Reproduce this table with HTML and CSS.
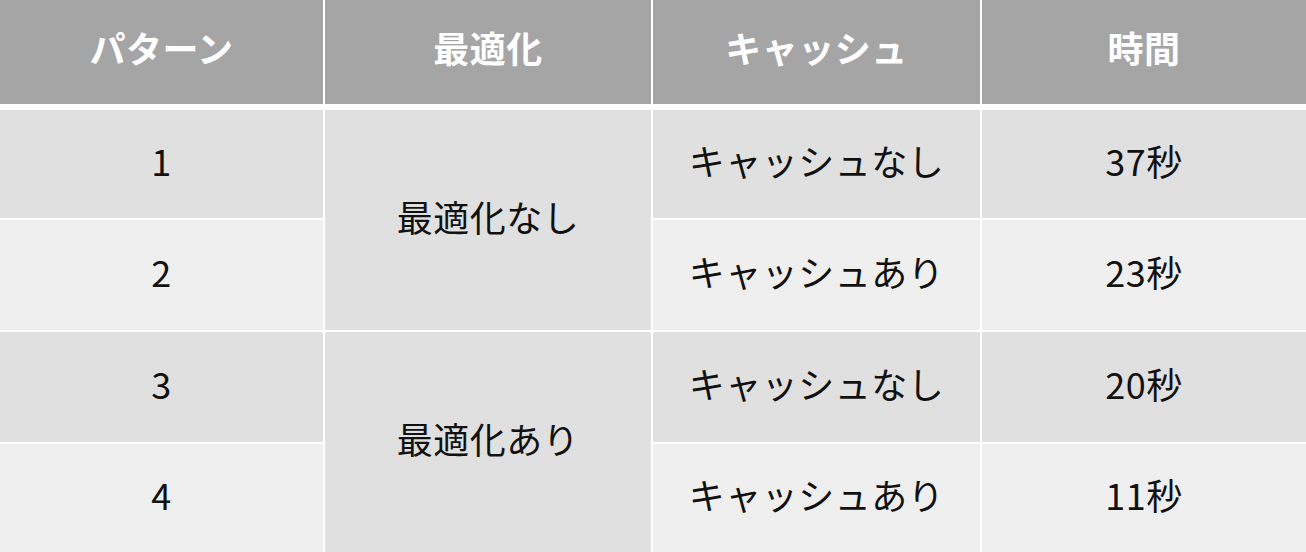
FILE: index.html
```html
<!DOCTYPE html>
<html lang="ja">
<head>
<meta charset="utf-8">
<link rel="stylesheet" href="styles.css">
</head>
<body>
<div class="table">
  <div class="cell head">パターン</div>
  <div class="cell head">最適化</div>
  <div class="cell head">キャッシュ</div>
  <div class="cell head">時間</div>

  <div class="cell dark">1</div>
  <div class="cell dark merged m1">最適化なし</div>
  <div class="cell dark">キャッシュなし</div>
  <div class="cell dark">37秒</div>

  <div class="cell light">2</div>
  <div class="cell light">キャッシュあり</div>
  <div class="cell light">23秒</div>

  <div class="cell dark">3</div>
  <div class="cell dark merged m2">最適化あり</div>
  <div class="cell dark">キャッシュなし</div>
  <div class="cell dark">20秒</div>

  <div class="cell light">4</div>
  <div class="cell light">キャッシュあり</div>
  <div class="cell light">11秒</div>
</div>
</body>
</html>
```
FILE: styles.css
```css
html, body {
  margin: 0;
  padding: 0;
  background: #ffffff;
}
body {
  width: 1306px;
  height: 552px;
  overflow: hidden;
  font-family: "Noto Sans CJK JP", "Noto Sans", sans-serif;
}
.table {
  display: grid;
  grid-template-columns: 323px 326px 327px 324px;
  grid-template-rows: 108px 108px 110px 110px 108px;
  column-gap: 2px;
  row-gap: 2px;
  background: #ffffff;
}
.cell {
  display: flex;
  align-items: center;
  justify-content: center;
  font-size: 36px;
  line-height: 1.2;
  color: #111111;
  letter-spacing: 0.5px;
  padding-bottom: 6px;
}
.head {
  grid-row: 1;
  background: #a5a5a5;
  color: #ffffff;
  font-weight: 700;
  margin-bottom: 4px;
  padding-bottom: 8px;
}
.dark { background: #e0e0e0; }
.light { background: #efefef; }
.merged { grid-column: 2; }
.m1 { grid-row: 2 / span 2; }
.m2 { grid-row: 4 / span 2; }
```
